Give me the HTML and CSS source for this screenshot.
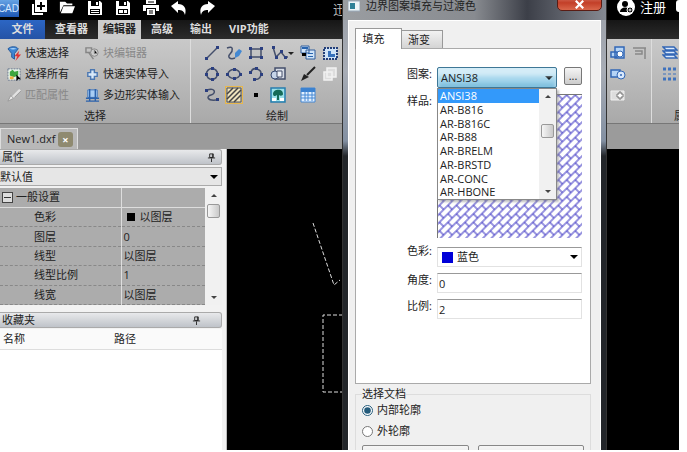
FILE: index.html
```html
<!DOCTYPE html>
<html lang="zh">
<head>
    <meta charset="UTF-8">
    <meta name="viewport" content="width=device-width, initial-scale=1.0">
    <title>CAD</title>
    <link rel="stylesheet" href="styles.css">
</head>
<body>
<div class="app">
    <!-- 标题栏 -->
    <header class="titlebar">
        <span class="logo">CAD</span>
        <div class="quick">
            <button class="ico" aria-label="新建"><svg viewBox="0 0 16 16"><path fill="#fff" d="M4 0h12v12H4zM1 4h2v9h9v2H1z"/><path stroke="#000" stroke-width="2" d="M10 2v8M6 6h8"/></svg></button>
            <button class="ico" aria-label="打开"><svg viewBox="0 0 18 16"><path fill="#fff" d="M1 13V1h6l2 2h6v2H5zM5 6h13l-3 8H2z"/></svg></button>
            <button class="ico" aria-label="保存"><svg viewBox="0 0 16 16"><path fill="#fff" d="M1 1h12l2 2v12H1z"/><path fill="#000" d="M4 1h8v5H4zM3 9h10v5H3z"/><path fill="#fff" d="M9 2h2v3H9zM4 10h8v1H4zM4 12h8v1H4z"/></svg></button>
            <button class="ico" aria-label="另存为"><svg viewBox="0 0 16 16"><path fill="#fff" d="M1 1h12l2 2v12H1z"/><path fill="#000" d="M4 1h8v5H4zM3 9h10v5H3z"/><path fill="#fff" d="M9 2h2v3H9zM4 10h4v3H4zM9 10h3v3H9z"/></svg></button>
            <button class="ico" aria-label="打印"><svg viewBox="0 0 16 16"><path fill="#fff" d="M3 0h10v4H3zM0 5h16v6h-3V8H3v3H0zM4 9h8v6H4z"/><path stroke="#000" d="M5 2h6M6 11h4M6 13h4"/></svg></button>
            <button class="ico" aria-label="撤销"><svg viewBox="0 0 16 16"><path fill="#fff" d="M0 6l7-5v3c6 0 9 4 7 11-1-4-3-5-7-5v3z"/></svg></button>
            <button class="ico" aria-label="重做"><svg viewBox="0 0 16 16"><path fill="#fff" d="M16 6L9 1v3c-6 0-9 4-7 11 1-4 3-5 7-5v3z"/></svg></button>
        </div>
        <span class="app-name">迅</span>
        <a class="account" href="#"><svg viewBox="0 0 18 18"><circle cx="9" cy="9" r="9" fill="#fff"/><circle cx="8" cy="6" r="3"/><path d="M3 14c0-6 10-6 10 0z"/><circle cx="13" cy="12" r="3" stroke="#fff"/><path stroke="#fff" d="M11.500 12h3M13 10.500v3"/></svg>注册</a>
        <i class="next-dot"></i>
    </header>

    <!-- 功能区标签 -->
    <nav class="tabs">
        <a class="tab file" href="#">文件</a>
        <a class="tab" href="#">查看器</a>
        <a class="tab active" href="#">编辑器</a>
        <a class="tab" href="#">高级</a>
        <a class="tab" href="#">输出</a>
        <a class="tab" href="#">VIP功能</a>
    </nav>

    <!-- 功能区 -->
    <section class="ribbon">
        <div class="group select-group">
            <div class="cmds">
                <button class="cmd"><svg viewBox="0 0 16 16"><path fill="#3f86d2" stroke="#24599c" d="M1 3c3-3 9-3 11 0L8 8v6l-3-2V8z"/><path fill="#a9d3fa" d="M3 3c2-1 5-1 7 0-2 1-5 1-7 0z"/><path fill="#e23434" d="M13 5L8 11h3l-2 5 6-7h-3z"/></svg>快速选择</button>
                <button class="cmd off"><svg viewBox="0 0 16 16"><path fill="none" stroke="#858585" stroke-width="1.500" d="M1 2h6v5H1zM4 7l5 7"/><circle cx="10" cy="7" r="4" fill="#ccc" stroke="#888"/><path stroke="#888" d="M10 4v4h3"/></svg>块编辑器</button>
                <button class="cmd"><svg viewBox="0 0 16 16"><path fill="#eaf4ea" stroke="#68768e" stroke-dasharray="2 1" d="M1 2h13v12H1z"/><path fill="#3da63f" d="M3 5l3-2 2 2 4-1v5l-5 2-4-2z"/><path fill="#f0b040" d="M3 10h4v3H3z"/><path d="M10 8v7l2-2h3z"/></svg>选择所有</button>
                <button class="cmd"><svg viewBox="0 0 16 16"><path fill="#d9e9f9" stroke="#4b77b1" stroke-width="1.500" d="M6 3h4v3h3v4h-3v3H6v-3H3V6h3z"/></svg>快速实体导入</button>
                <button class="cmd off"><svg viewBox="0 0 16 16"><path stroke="#e2e2e2" stroke-width="3" d="M6 10l8-8"/><path stroke="#999" d="M8 10l7-7"/><path fill="#eee" stroke="#999" d="M1 14l3-6 3 3z"/></svg>匹配属性</button>
                <button class="cmd"><svg viewBox="0 0 16 16"><path fill="#a8cdf4" stroke="#3c73bb" d="M3 2h10v8H3z"/><path fill="none" stroke="#2b62ac" stroke-width="1.500" d="M5 1v13M11 1v13M1 11h14M1 14h14"/></svg>多边形实体输入</button>
            </div>
            <span class="caption">选择</span>
        </div>
        <div class="group draw-group">
            <div class="tools">
                <button class="ico" aria-label="直线"><svg viewBox="0 0 16 16"><path class="ln" d="M3 13L13 3"/><path class="pt" d="M1 12h3v3H1zM12 1h3v3h-3z"/></svg></button>
                <button class="ico" aria-label="草图"><svg viewBox="0 0 16 16"><path class="ln" d="M1 3c7-3 6 3 3 6s0 6 5 4"/><path fill="#4388d2" d="M9 8l4-4 3 2-3 5-4 2z"/></svg></button>
                <button class="ico" aria-label="矩形"><svg viewBox="0 0 16 16"><path class="ln" d="M3 4h10v8H3z"/><path class="pt" d="M1 2h3v3H1zM12 2h3v3h-3zM1 11h3v3H1zM12 11h3v3h-3z"/></svg></button>
                <button class="ico wide" aria-label="多段线"><svg viewBox="0 0 24 16"><path class="ln" d="M3 2l3 10 5-5 4 5h3"/><path class="pt" d="M2 1h3v3H2zM5 11h3v3H5zM10 5h3v3h-3zM14 11h3v3h-3z"/><path fill="#222" d="M18 7h6l-3 3z"/></svg></button>
                <button class="ico" aria-label="插入块"><svg viewBox="0 0 16 16"><path fill="#cfe3f8" stroke="#315f9d" d="M1 1h8v7H1zM6 5h9v9H6z"/><path fill="#2865b0" d="M2 2h6v2H2zM8 8h5v1H8zM8 11h5v1H8z"/><path d="M2 8h4v3H2z"/></svg></button>
                <button class="ico" aria-label="块"><svg viewBox="0 0 16 16"><path fill="#cfe3f8" stroke="#223e79" stroke-width="2" stroke-dasharray="2 1" d="M2 3h13v11H2z"/><path fill="#3771bb" d="M6 6h3v3h4v3H6z"/></svg></button>
                <button class="ico" aria-label="圆"><svg viewBox="0 0 16 16"><circle class="ln" cx="8" cy="8" r="5.500"/><path class="pt" d="M7 1h3v3H7zM7 12h3v3H7zM1 7h3v3H1zM12 7h3v3h-3z"/></svg></button>
                <button class="ico" aria-label="椭圆"><svg viewBox="0 0 16 16"><ellipse class="ln" cx="8" cy="8" rx="6" ry="4.500"/><path class="pt" d="M7 2h3v3H7zM7 11h3v3H7zM0 7h3v3H0zM13 7h3v3h-3z"/></svg></button>
                <button class="ico" aria-label="圆弧"><svg viewBox="0 0 16 16"><path class="ln" d="M3 6C5 0 14 3 13 9c-1 4-4 5-7 4"/><path class="pt" d="M1 5h3v3H1zM7 1h3v3H7zM12 7h3v3h-3zM5 12h3v3H5z"/></svg></button>
                <button class="ico" aria-label="面域"><svg viewBox="0 0 16 16"><path fill="#d5dbe5" stroke="#444f6b" stroke-width="1.500" d="M5 2h10v11H5z"/><circle cx="5" cy="9" r="4" fill="#c6d4e8" stroke="#34476f"/><path fill="#eef2f8" stroke="#444f6b" d="M7 5h5v6H7z"/></svg></button>
                <button class="ico" aria-label="画笔"><svg viewBox="0 0 16 16"><path stroke="#222" stroke-width="2" d="M7 9l8-8"/><path fill="#222" d="M1 15l3-7 5 3z"/></svg></button>
                <button class="ico" aria-label="复制块"><svg viewBox="0 0 16 16"><path fill="#ddd" stroke="#f2f2f2" stroke-width="1.500" d="M5 2h9v9H5zM2 6h8v8H2z"/></svg></button>
                <button class="ico" aria-label="样条"><svg viewBox="0 0 16 16"><path class="ln" d="M3 3c9-3 9 4 4 5s-4 6 5 5"/><path class="pt" d="M1 2h3v3H1zM12 11h3v3h-3z"/></svg></button>
                <button class="ico hot" aria-label="填充"><svg viewBox="0 0 16 16"><path fill="#eee4bd" stroke="#555" d="M1 1h14v14H1z"/><path stroke="#444" stroke-width="1.500" d="M1 7l6-6M1 12L12 1M3 15L15 3M8 15l7-7"/></svg></button>
                <button class="ico" aria-label="点"><svg viewBox="0 0 16 16"><path d="M6 6h4v4H6z"/></svg></button>
                <button class="ico" aria-label="图像"><svg viewBox="0 0 16 16"><path fill="#9be0e8" stroke="#277eae" stroke-width="1.500" d="M1 1h14v14H1z"/><path fill="#156b57" d="M3 7c0-5 10-6 10 0 0 2-3 2-4 1v5H7V8C5 10 3 9 3 7z"/><path fill="#fff" d="M2 11h4v3H2zM10 11h4v3h-4z"/></svg></button>
                <button class="ico" aria-label="表格"><svg viewBox="0 0 16 16"><path fill="#e3f0ff" stroke="#4488d4" d="M1 1h14v14H1z"/><path fill="#3c82d0" d="M1 1h14v4H1z"/><path stroke="#4488d4" d="M1 8h14M1 11h14M5 4v10M8 4v10M12 4v10"/></svg></button>
            </div>
            <span class="caption">绘制</span>
        </div>
        <div class="group more-group">
            <div class="tools end">
                <button class="ico" aria-label="旋转"><svg viewBox="0 0 16 16"><path fill="#b5d4f6" stroke="#3267b6" stroke-width="1.500" d="M5 2h9v11H5zM1 7h6v5H1z"/><circle cx="10" cy="9" r="3" fill="#fff" stroke="#3267b6"/></svg></button>
                <button class="ico" aria-label="对齐"><svg viewBox="0 0 16 16"><path fill="none" stroke="#888" stroke-width="1.500" d="M1 3h13M3 6h7v3H3M13 3v11"/></svg></button>
                <button class="ico" aria-label="缩放"><svg viewBox="0 0 16 16"><path fill="#b5d4f6" stroke="#3267b6" stroke-width="1.500" d="M1 4h9v7H1z"/><circle cx="11" cy="9" r="4" fill="#d8e8fc" stroke="#3267b6"/><circle cx="11" cy="9" r="1" fill="#3267b6"/></svg></button>
                <i></i>
                <button class="ico" aria-label="移动"><svg viewBox="0 0 16 16"><path fill="#ddd" stroke="#f0f0f0" d="M1 4h13v9H1z"/><path fill="#fff" stroke="#777" d="M9 5h2v2h2v3h-2v2H9v-2H7V7h2z"/></svg></button>
            </div>
        </div>
        <div class="group last-group">
            <button class="ico" aria-label="图层"><svg viewBox="0 0 16 16"><path fill="#dbeafc" stroke="#3266b5" stroke-width="1.500" d="M1 2h11l3 3H4zM1 6h11l3 3H4zM1 10h11l3 3H4z"/></svg></button>
            <button class="ico" aria-label="阵列"><svg viewBox="0 0 16 16"><path stroke="#3f72bd" stroke-width="3" stroke-dasharray="3 2" d="M1 3h14M1 13h14"/><path stroke="#3f72bd" stroke-dasharray="3 2" d="M1 8h14"/></svg></button>
            <span class="caption">属</span>
        </div>
    </section>

    <!-- 文档标签 -->
    <div class="docs">
        <div class="doc">New1.dxf <button class="doc-close" aria-label="关闭文档">×</button></div>
    </div>

    <main class="work">
        <aside class="side">
            <h2 class="bar">属性 <svg class="pin" viewBox="0 0 10 10"><path fill="none" stroke="#222" d="M3 1h4v4H3zM1 5.500h8M5 6v4M6 1v4"/></svg></h2>
            <select class="preset" aria-label="属性集"><option>默认值</option></select>
            <div class="props">
                <table>
                    <tr class="head"><th><i class="minus"></i>一般设置</th><td></td></tr>
                    <tr><th>色彩</th><td><i class="swatch"></i>以图层</td></tr>
                    <tr><th>图层</th><td>0</td></tr>
                    <tr><th>线型</th><td>以图层</td></tr>
                    <tr><th>线型比例</th><td>1</td></tr>
                    <tr><th>线宽</th><td>以图层</td></tr>
                </table>
                <div class="scroll"><i class="up"></i><i class="thumb"></i><i class="down"></i></div>
            </div>
            <h2 class="bar fav">收藏夹 <svg class="pin" viewBox="0 0 10 10"><path fill="none" stroke="#222" d="M3 1h4v4H3zM1 5.500h8M5 6v4M6 1v4"/></svg></h2>
            <table class="favs"><tr><th>名称</th><th>路径</th></tr></table>
        </aside>
        <!-- 画布上的虚线图形 -->
        <svg class="canvas"><path d="M86 74L107 136L113 131M230 166H96V243H230"/></svg>
    </main>

    <!-- 填充对话框 -->
    <div class="dialog" role="dialog" aria-labelledby="dlg-title">
        <div class="dlg-title">
            <svg class="dlg-icon" viewBox="0 0 12 12"><path fill="#eef5f8" stroke="#9ab" d="M0 1h12v10H0z"/><path fill="#2f8198" d="M2 3h5v6H2z"/></svg>
            <span id="dlg-title">边界图案填充与过渡色</span>
            <button class="dlg-close" aria-label="关闭"><svg viewBox="0 0 12 12"><path stroke="#fff" stroke-width="3" d="M1 1l10 10M11 1L1 11"/></svg></button>
        </div>
        <div class="client">
            <div class="dlg-tabs">
                <button class="dlg-tab on">填充</button>
                <button class="dlg-tab">渐变</button>
            </div>
            <form class="page">
                <label for="pattern">图案:</label>
                <div class="row">
                    <div class="combo">
                        <select id="pattern"><option>ANSI38</option></select>
                        <div class="list">
                            <ul>
                                <li class="sel">ANSI38</li>
                                <li>AR-B816</li>
                                <li>AR-B816C</li>
                                <li>AR-B88</li>
                                <li>AR-BRELM</li>
                                <li>AR-BRSTD</li>
                                <li>AR-CONC</li>
                                <li>AR-HBONE</li>
                            </ul>
                            <div class="scroll"><i class="up"></i><i class="thumb mid"></i><i class="down"></i></div>
                        </div>
                    </div>
                    <button type="button" class="browse">...</button>
                </div>
                <span class="lbl">样品:</span>
                <svg class="sample">
                    <defs><pattern id="hatch" width="12" height="12" patternUnits="userSpaceOnUse" patternTransform="rotate(-45)"><path d="M0 1H12M0 7H12M1 1V7M7 7V13M7 0V1" fill="none" stroke="#332cc0"/></pattern></defs>
                    <rect width="100%" height="100%" fill="url(#hatch)"/>
                </svg>
                <label for="color">色彩:</label>
                <div class="color"><i class="swatch blue"></i><select id="color"><option>蓝色</option></select></div>
                <label for="angle">角度:</label>
                <input id="angle" type="text" value="0">
                <label for="scale">比例:</label>
                <input id="scale" type="text" value="2">
            </form>
            <fieldset class="docsel">
                <legend>选择文档</legend>
                <label><input type="radio" name="outline" checked>内部轮廓</label>
                <label><input type="radio" name="outline">外轮廓</label>
                <div class="actions"><button aria-label="选择点"></button><button aria-label="选择实体"></button></div>
            </fieldset>
        </div>
    </div>
</div>
</body>
</html>
```
FILE: styles.css
```css
* { box-sizing: border-box; }
body {
    margin: 0;
    background: #fff;
    color: #222;
    font: 11px/14px "Open Sans", "Noto Sans CJK SC", sans-serif;
}
button, input, select { font: inherit; color: inherit; margin: 0; padding: 0; }
button { border: none; background: none; white-space: nowrap; }
a { color: inherit; text-decoration: none; }
h2 { margin: 0; font: inherit; }
i { font-style: normal; }
table { border-collapse: collapse; }
th { font-weight: normal; text-align: left; }
.app {
    position: relative;
    display: flex;
    flex-direction: column;
    height: calc(100vh - 2px);
    margin-right: 8px;
    overflow: hidden;
}
.ico { display: flex; width: 16px; height: 16px; }
.ico svg { width: 100%; height: 16px; }

/* title bar */
.titlebar { display: flex; height: 20px; background: #000; color: #fff; }
.logo {
    display: flex;
    justify-content: end;
    width: 19px;
    height: 17px;
    overflow: hidden;
    background: linear-gradient(#66a3e4, #1c56b4);
    color: #d5e8ff;
    font: 10px/18px "Liberation Sans", sans-serif;
}
.quick { display: flex; gap: 12px; margin-left: 12px; }
.quick .ico { height: 15px; }
.app-name { margin-left: 118px; font-size: 13px; line-height: 18px; color: #bbb; }
.account {
    display: flex;
    align-items: center;
    gap: 5px;
    height: 14px;
    margin-left: auto;
    font-size: 13px;
}
.account svg { width: 18px; height: 18px; }
.next-dot { width: 3px; height: 12px; margin-left: 10px; background: #fff; border-radius: 6px 0 0 6px; }

/* ribbon tabs */
.tabs { display: flex; gap: 3px; height: 19px; background: linear-gradient(#161616, #2c2c2c); color: #ddd; font-weight: bold; }
.tab { padding: 0 7px; line-height: 18px; }
.tab.file { width: 45px; background: linear-gradient(#2c66c4, #2553a6); text-align: center; }
.tab.active { padding: 0 5px; background: #ccc; color: #222; }

/* ribbon */
.ribbon {
    display: flex;
    height: 85px;
    background: linear-gradient(#c9c9c9, #a9a9a9);
    border-bottom: 1px solid #777;
}
.group { display: flex; flex-direction: column; justify-content: space-between; padding: 6px 7px 0; border-right: 1px solid #ddd; }
.caption { text-align: center; }
.select-group { width: 191px; }
.cmds { display: grid; grid-template-columns: 78px 1fr; row-gap: 5px; }
.cmd { display: flex; align-items: center; gap: 3px; height: 16px; }
.cmd svg { width: 15px; height: 15px; flex: none; }
.cmd.off { color: #888; }
.tools { display: grid; grid-template-columns: 16px 16px 16px 24px 16px 16px; gap: 5px 6px; }
.tools .wide { width: 24px; }
.draw-group { width: 173px; padding-left: 13px; padding-right: 14px; border: none; }
.ln { fill: none; stroke: #444f6b; stroke-width: 1.5px; }
.pt { fill: #2b3f80; }
.hot { outline: 1px solid #e9b84a; }
.more-group { flex: 1; }
.tools.end { grid-template-columns: 16px 16px; justify-content: end; margin-right: -4px; }
.last-group { width: 27px; padding-left: 10px; gap: 5px; overflow: hidden; border: none; }
.last-group .caption { margin-top: auto; padding-left: 12px; }

/* document tabs */
.docs { display: flex; align-items: end; height: 25px; background: #9b9b9b; }
.doc {
    display: flex;
    align-items: center;
    justify-content: space-between;
    width: 78px;
    height: 21px;
    padding: 0 4px 0 6px;
    background: #b8b8b8;
    border: 1px solid #ddd;
    border-bottom: none;
}
.doc-close { width: 15px; height: 15px; line-height: 13px; background: #8f8a70; border-radius: 3px; color: #fff; font-weight: bold; }

/* side panel */
.work { display: flex; flex: 1; min-height: 0; background: #000; }
.side { display: flex; flex-direction: column; width: 227px; padding-right: 4px; background: #f2f2f2; border-right: 1px solid #bbb; }
.bar {
    display: flex;
    align-items: center;
    height: 16px;
    padding: 0 5px 0 2px;
    background: linear-gradient(#e8e9eb, #bfc3c9);
    border: 1px solid #aaa;
    border-left: none;
    border-radius: 0 3px 3px 0;
}
.pin { width: 9px; height: 9px; margin-left: auto; }
.bar.fav { margin-top: 7px; padding-right: 20px; }
.preset, .color select, .combo select {
    appearance: none;
    background: url("data:image/svg+xml,%3Csvg xmlns='http://www.w3.org/2000/svg' width='8' height='4'%3E%3Cpath d='M0 0h8L4 4z'/%3E%3C/svg%3E") no-repeat right 3px center;
}
.preset { height: 19px; margin: 2px 0; border: 1px solid #aaa; border-left: none; background-color: #e6e6e6; }
.props { display: flex; height: 117px; }
.props table { flex: 1; table-layout: fixed; background: #acacac; }
.props th, .props td { height: 19px; padding: 0 0 0 34px; border-bottom: 1px dashed #888; }
.props td { padding-left: 2px; border-left: 1px solid #ddd; }
.props .head th { padding-left: 2px; }
.props .head th, .props .head td { border-bottom: 1px solid #ddd; }
.props th { width: 121px; }
.minus { display: inline-block; width: 11px; height: 11px; margin-right: 3px; border: 1px solid #444; background: linear-gradient(#333, #333) center / 7px 1px no-repeat #ddd; vertical-align: -2px; }
.swatch { display: inline-block; width: 8px; height: 8px; margin: 0 5px 0 3px; background: #000; }
.scroll { display: flex; flex-direction: column; align-items: center; width: 17px; padding: 6px 0; background: #f1f1f1; }
.up, .down { border: 3px solid transparent; }
.up { border-top: none; border-bottom-color: #444; }
.down { margin-top: auto; border-bottom: none; border-top-color: #444; }
.thumb { width: 13px; height: 14px; margin-top: 7px; border: 1px solid #999; border-radius: 2px; background: linear-gradient(90deg, #f6f6f6, #c9c9c9); }
.favs { flex: 1; background: #fff; margin-top: 1px; }
.favs tr { vertical-align: top; }
.favs th { width: 50%; padding: 3px 3px 0; background: linear-gradient(#fafafa 20px, #ddd 20px, #ddd 21px, #fff 21px); }
.canvas { flex: 1; height: 100%; fill: none; stroke: #ddd; stroke-dasharray: 4 2; }

/* dialog */
.dialog {
    position: absolute;
    top: -9px;
    bottom: -40px;
    left: 342px;
    width: 265px;
    padding: 0 5px;
    background: linear-gradient(#999ea6, #a8adb6 80px, #8390a2 150px, #23262a 165px);
    border: 1px solid #333;
    border-top: none;
}
.dlg-title {
    display: flex;
    align-items: center;
    gap: 6px;
    height: 29px;
    margin: 0 -5px;
    padding: 0 4px 0 5px;
    background: linear-gradient(90deg, #9a9da1, #888b90 50%, #3c3f48 70%, #858992);
}
.dlg-icon { width: 12px; height: 12px; }
.dlg-close {
    display: flex;
    align-items: center;
    justify-content: center;
    align-self: start;
    width: 45px;
    height: 20px;
    padding-top: 6px;
    margin-left: auto;
    border: 1px solid #5a1c14;
    border-radius: 0 0 5px 5px;
    background: linear-gradient(#e09a8c, #c33f28 60%, #d9674b);
}
.dlg-close svg { width: 9px; height: 9px; }
.client { height: 100%; padding: 6px 9px 6px 6px; background: #f0f0f0; border: 1px solid #fff; }
.dlg-tabs { display: flex; align-items: end; height: 21px; }
.dlg-tab { width: 41px; height: 18px; padding-right: 6px; border: 1px solid #999; border-left: none; border-bottom: none; background: linear-gradient(#f2f2f2, #d4d4d4); }
.dlg-tab.on { position: relative; width: 47px; height: 21px; margin-bottom: -1px; border-left: 1px solid #999; padding-right: 10px; background: #fff; }
.page {
    display: grid;
    grid-template-columns: 76px 1fr;
    gap: 6px 5px;
    height: 336px;
    padding: 18px 8px 0 0;
    align-content: start;
    background: #fff;
    border: 1px solid #aaa;
}
.page > label, .lbl { text-align: right; }
.row { display: flex; gap: 7px; }
.combo { position: relative; flex: 1; height: 21px; }
.combo select {
    width: 100%;
    height: 21px;
    padding-left: 3px;
    border: 1px solid #3f7796;
    border-radius: 2px;
    background-color: #a5d6ec;
    box-shadow: inset 0 8px 4px #d4ecf7, inset 0 -4px 4px #7fbfdd;
}
.browse { width: 18px; height: 18px; border: 1px solid #777; border-radius: 2px; background: linear-gradient(#f5f5f5, #ccc); }
/* opened drop-down lies over the sample */
.list {
    position: absolute;
    top: 21px;
    left: 0;
    right: 0;
    display: flex;
    height: 112px;
    background: #fff;
    border: 1px solid #888;
    box-shadow: 2px 2px 2px #8888;
}
.list ul { display: grid; flex: 1; margin: 0; padding: 0; list-style: none; grid-auto-rows: 1fr; }
.list li { padding-left: 2px; line-height: 13px; }
.list .sel { background: #3399fa; color: #fff; }
.thumb.mid { margin-top: 26px; }
.sample { width: 100%; height: 144px; border-top: 1px solid #777; border-left: 1px solid #777; }
.color, .page input { height: 20px; border: 1px solid #e2e2e2; border-top-color: #999; background: #fff; }
.color { display: flex; align-items: center; margin-top: 3px; }
.color select { flex: 1; height: 18px; border: none; }
.swatch.blue { width: 11px; height: 11px; margin: 0 4px; background: #0000d8; }
.page input { width: 100%; padding-left: 1px; }
.docsel { display: grid; justify-items: start; gap: 7px; margin: 3px 0 0; padding: 2px 6px; border: 1px solid #ddd; }
.docsel legend { padding: 0; }
.docsel label { display: flex; align-items: center; gap: 4px; }
.docsel input { width: 11px; height: 11px; accent-color: #245b7b; }
.actions { display: flex; gap: 9px; width: 100%; }
.actions button { flex: 1; height: 20px; border: 1px solid #888; border-radius: 2px; background: linear-gradient(#f6f6f6, #ddd); }
```
